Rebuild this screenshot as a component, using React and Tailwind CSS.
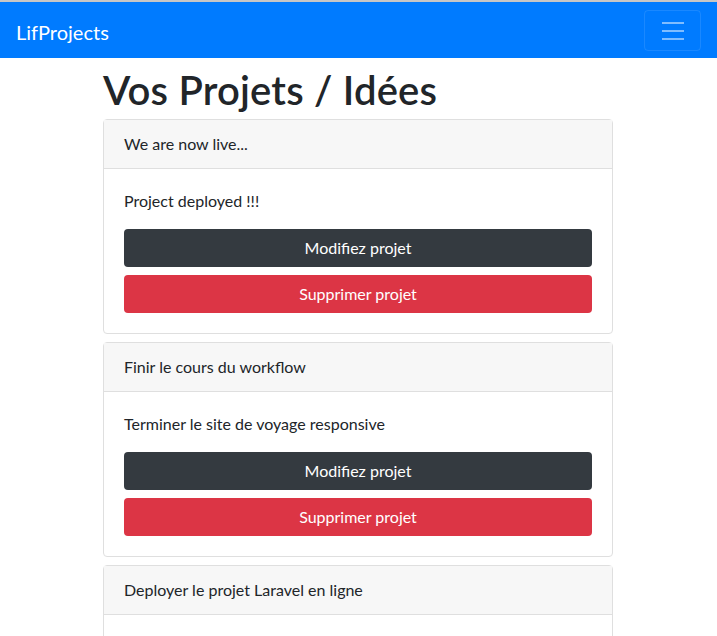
const projects = [
  { title: 'We are now live...', description: 'Project deployed !!!' },
  { title: 'Finir le cours du workflow', description: 'Terminer le site de voyage responsive' },
  { title: 'Deployer le projet Laravel en ligne', description: 'Mettre le projet en production' },
];

const font = { fontFamily: '"Segoe UI", Lato, "Noto Sans", sans-serif' };

const App = () => {
  return (
    <div className="min-h-screen bg-white text-[#212529]" style={font}>
      <div className="h-[2px] bg-[#c6c6c6]" />
      <nav className="h-[56px] bg-[#007bff] flex items-center justify-between pl-4 pr-4">
        <a href="#" className="mt-[3px] text-white text-[20px] leading-[30px]">LifProjects</a>
        <button className="mt-[1px] w-[57px] h-[41px] border border-white/10 rounded flex items-center justify-center">
          <svg width="30" height="30" viewBox="0 0 30 30">
            <path d="M4 7h22M4 15h22M4 23h22" stroke="rgba(255,255,255,0.5)" strokeWidth="2" strokeMiterlimit="10" />
          </svg>
        </button>
      </nav>

      <div className="w-[510px] ml-[103px]">
        <h1 className="mt-2 mb-[5px] text-[40px] leading-[48px] font-semibold tracking-[0.2px]">Vos Projets / Idées</h1>

        {projects.map((project) => (
          <div key={project.title} className="mb-2 border border-[#dfdfdf] rounded bg-white">
            <div className="px-5 py-3 bg-[#f7f7f7] border-b border-[#dfdfdf] leading-6">
              {project.title}
            </div>
            <div className="p-5">
              <p className="mb-4 leading-6">{project.description}</p>
              <button className="w-full h-[38px] rounded bg-[#343a40] text-white leading-6">Modifiez projet</button>
              <button className="mt-2 w-full h-[38px] rounded bg-[#dc3545] text-white leading-6">Supprimer projet</button>
            </div>
          </div>
        ))}
      </div>
    </div>
  );
};

export default App;
